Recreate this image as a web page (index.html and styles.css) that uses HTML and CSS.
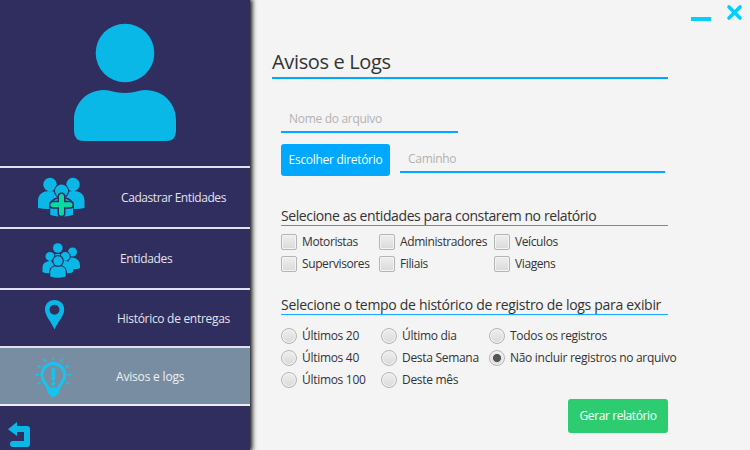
FILE: index.html
```html
<!DOCTYPE html>
<html lang="pt-BR">
<head>
<meta charset="utf-8">
<title>Avisos e Logs</title>
<link rel="stylesheet" href="styles.css">
</head>
<body>
<div class="window">
  <aside class="sidebar">
    <div class="profile">
      <svg class="avatar" width="104" height="118" viewBox="0 0 104 118"><circle cx="52" cy="30" r="29.3"/><path d="M31 67C13 67 1 81 1 97V108Q1 118 11 118H93Q103 118 103 108V97C103 81 91 67 72 67C65 67 63 70 52 70S38 67 31 67Z"/></svg>
    </div>
    <nav class="menu">
      <a class="item register">
        <svg class="icon" width="48" height="41" viewBox="0 0 48 41"><g><circle cx="12" cy="7.5" r="6.7"/><circle cx="35" cy="7.5" r="6.7"/><path d="M0 31V24C0 17 5 14 12 14S21 18 21 22V31Q9 33 0 31ZM46.5 31V24C46.5 17 42 14 35 14S26 18 26 22V31Q38 33 46.5 31Z"/></g><circle class="cut" cx="23.5" cy="14" r="7.6"/><circle cx="23.5" cy="14" r="6.5"/><path class="cut" d="M11 40V31C11 23 16 20 23.5 20S36 23 36 31V40Z"/><path d="M12.3 38V31C12.3 24 17 21.5 23.5 21.5S35 24 35 31V38Q23.5 41 12.3 38Z"/><path class="plus-edge" d="M23.5 19.5V36.2M15 27.7H32"/><path class="plus" d="M23.5 19.5V36.2M15 27.7H32"/></svg>
        <span>Cadastrar Entidades</span>
      </a>
      <a class="item entities">
        <svg class="icon" width="40" height="36" viewBox="0 0 40 36"><circle cx="15.8" cy="5" r="4.8"/><circle cx="30.5" cy="9" r="4.5"/><path d="M11 11H21V15H11ZM25 15C34 13 38 17 38 23V25Q34 27 30 26Z"/><circle class="cut" cx="8" cy="13.4" r="5.5"/><circle cx="8" cy="13.4" r="4.5"/><circle class="cut" cx="23.2" cy="13.4" r="5.5"/><circle cx="23.2" cy="13.4" r="4.5"/><path d="M.5 29V25C.5 20 4 18 9 18L13 22L9 30Q4 31 .5 29ZM31 29V25C31 20 28 18 22 18L18 22L23 30Q28 31 31 29Z"/><path class="cut" d="M7 36V30C7 25 10 22 16 22S25 25 25 30V36Z"/><path d="M8.3 33.5V29C8.3 25 11 23 16 23S23.7 25 23.7 29V33.5Q16 36 8.3 33.5Z"/><circle class="cut" cx="16" cy="18" r="5.9"/><circle cx="16" cy="18" r="4.7"/></svg>
        <span>Entidades</span>
      </a>
      <a class="item history">
        <svg class="icon" width="20" height="30" viewBox="0 0 20 30"><path fill-rule="evenodd" d="M9.5 0C3.5 0 0 4.3 0 9.5C0 16 6.5 22 9.5 29.5C12.5 22 19.2 16 19.2 9.5C19.2 4.3 15.5 0 9.5 0ZM9.5 4.8A5 5 0 1 1 9.5 14.8A5 5 0 1 1 9.5 4.8Z"/></svg>
        <span>Histórico de entregas</span>
      </a>
      <a class="item logs active">
        <svg class="icon" width="37" height="41" viewBox="0 0 37 41"><path class="ray" d="M18.3 0V3.2M9 2L10.7 5M27.5 2L25.8 5M2.5 8.5L5.5 10.3M34 8.5L31 10.3M0 17.7H4M32.5 17.7H36.5M2.5 27L5.5 25.4M34 27L31 25.4"/><path class="bulb" d="M13.2 32C12.5 27 6.9 25 6.9 17.9A11.4 11.4 0 0 1 29.7 17.9C29.7 25 24 27 23.3 32Z"/><path d="M12.3 31H24.2V35Q24.2 37 21.5 37.5Q20.5 40 18.3 40T15 37.5Q12.3 37 12.3 35Z"/><path d="M16.3 11.3H20.3L19.7 23.5H16.9Z"/><circle cx="18.3" cy="26.7" r="2"/></svg>
        <span>Avisos e logs</span>
      </a>
    </nav>
    <div class="back">
      <svg width="22" height="25" viewBox="0 0 22 25"><path d="M0 7.3L9 0V4H19Q22 4 22 7V22Q22 25 19 25H4Q1.8 24.6 2 22Q2 19 5 19H16V10H9V14Z"/></svg>
    </div>
  </aside>
  <main class="content">
    <div class="controls">
      <svg width="52" height="17" viewBox="0 0 52 17"><path class="minimize" d="M0 13H20V17H0Z"/><path class="close" d="M38 3L49 14M49 3L38 14"/></svg>
    </div>
    <h1><span>Avisos e Logs</span></h1>
    <div class="form">
      <div class="field name"><span>Nome do arquivo</span></div>
      <div class="directory">
        <button class="choose"><span>Escolher diretório</span></button>
        <div class="field path"><span>Caminho</span></div>
      </div>
      <h2 class="h-entities"><span>Selecione as entidades para constarem no relatório</span></h2>
      <div class="options checks">
        <label><i class="box"></i><span>Motoristas</span></label>
        <label><i class="box"></i><span>Administradores</span></label>
        <label><i class="box"></i><span>Veículos</span></label>
        <label><i class="box"></i><span>Supervisores</span></label>
        <label><i class="box"></i><span>Filiais</span></label>
        <label><i class="box"></i><span>Viagens</span></label>
      </div>
      <h2 class="h-time"><span>Selecione o tempo de histórico de registro de logs para exibir</span></h2>
      <div class="options radios">
        <label><i class="box round"></i><span>Últimos 20</span></label>
        <label><i class="box round"></i><span>Último dia</span></label>
        <label><i class="box round"></i><span>Todos os registros</span></label>
        <label><i class="box round"></i><span>Últimos 40</span></label>
        <label><i class="box round"></i><span>Desta Semana</span></label>
        <label><i class="box round selected"></i><span>Não incluir registros no arquivo</span></label>
        <label><i class="box round"></i><span>Últimos 100</span></label>
        <label><i class="box round"></i><span>Deste mês</span></label>
      </div>
      <button class="generate"><span>Gerar relatório</span></button>
    </div>
  </main>
</div>
</body>
</html>
```
FILE: styles.css
```css
* { box-sizing: border-box; }
body { margin: 0; font: 12px/16px "Open Sans", "Noto Sans", sans-serif; letter-spacing: -0.3px; color: #333; }
h1, h2 { margin: 0; font-weight: 400; }
svg { display: block; flex: none; }
button { border: 0; padding: 0; font: inherit; letter-spacing: inherit; color: #fff; border-radius: 3px; }
span { white-space: nowrap; }
.window { display: flex; width: 750px; height: 450px; overflow: hidden; background: #f4f4f4; }

.sidebar { flex: none; width: 250px; height: 450px; background: #2f2e5f; box-shadow: 1px 0 5px 1px #000; fill: #0ab8e8; }
.profile { height: 166px; padding: 23px 0 0 73px; }
.menu { border-bottom: 2px solid #eeecf4; }
.item { display: flex; align-items: flex-start; height: 61px; border-top: 2px solid #e2e0ec; color: #e3e3ed; }
.history, .logs { height: 58px; }
.active { background: #788da2; color: #eef1f4; fill: #16c4ef; }
.register .icon { margin: 9px 35px 0 38px; }
.entities .icon { margin: 14px 38px 0 42px; }
.history .icon { margin: 10px 52px 0 45px; }
.logs .icon { margin: 9px 44px 0 35px; }
.register span { margin-top: 22px; letter-spacing: -0.42px; }
.entities span { margin-top: 22px; }
.history span { margin-top: 21px; }
.logs span { margin-top: 21px; letter-spacing: -0.18px; }
.cut { fill: #2f2e5f; }
.plus, .plus-edge { fill: none; stroke-linecap: round; }
.plus-edge { stroke: #2f2e5f; stroke-width: 8px; }
.plus { stroke: #08dba0; stroke-width: 5px; }
.ray { fill: none; stroke: #16c4ef; stroke-width: 1.6px; }
.bulb { fill: none; stroke: #16c4ef; stroke-width: 3px; }
.back { padding: 16px 0 0 8px; }

.content { flex: 1; padding-left: 22px; }
.controls { height: 45px; padding: 4px 0 0 419px; }
.minimize { fill: #00d0ff; }
.close { fill: none; stroke: #00d0ff; stroke-width: 3.6px; stroke-linecap: round; }
.controls svg { overflow: visible; }
h1 { width: 396px; height: 34px; font-size: 20px; line-height: 34px; letter-spacing: -0.35px; border-bottom: 2px solid #00a8ff; }
.form { width: 387px; margin-left: 9px; }
.field { border-bottom: 2px solid #00a8ff; padding-left: 8px; color: #b2b2b2; }
.name { width: 177px; height: 26px; margin-top: 28px; padding-top: 4px; }
.directory { display: flex; gap: 10px; margin-top: 11px; }
.choose { width: 109px; height: 32px; background: #00a8ff; }
.path { width: 265px; height: 29px; padding-top: 7px; }
h2 { height: 19px; font-size: 14px; line-height: 17px; letter-spacing: -0.3px; border-bottom: 1px solid #15aaff; }
.h-entities { margin-top: 31px; letter-spacing: -0.4px; }
.options { display: grid; grid-auto-rows: 16px; row-gap: 6px; }
.checks { grid-template-columns: 98px 115px auto; margin-top: 8px; }
.radios { grid-template-columns: 100px 108px auto; margin-top: 13px; }
.h-time { margin-top: 24px; }
label { display: flex; gap: 5px; }
.checks { letter-spacing: -0.4px; }
.box { flex: none; width: 16px; height: 16px; border: 1px solid #b5b5b5; border-radius: 2px; background: linear-gradient(#efefef, #dadada); box-shadow: inset 0 0 0 1px #f3f3f3; }
.round { border-radius: 50%; }
.selected { background: radial-gradient(circle, #555 3.7px, transparent 4.4px), linear-gradient(#efefef, #dadada); }
.generate { display: block; width: 100px; height: 34px; margin: 11px 0 0 287px; background: #2ecc71; }
.generate span { letter-spacing: -0.4px; }
```
